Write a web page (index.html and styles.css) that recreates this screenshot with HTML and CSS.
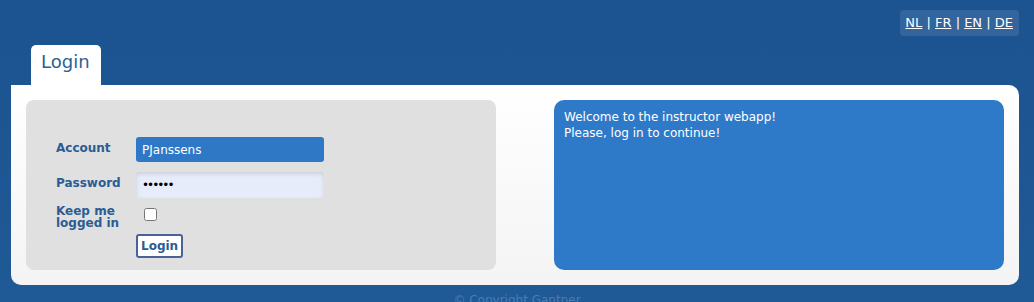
FILE: index.html
```html
<!DOCTYPE html>
<html lang="en">
<head>
  <meta charset="UTF-8"/>
  <title>Instructor webapp - Login</title>
  <link rel="stylesheet" href="styles.css">
</head>
<body>
<header class="top-bar">
  <div class="lang-box">
    <a href="#">NL</a> | <a href="#">FR</a> | <a href="#">EN</a> | <a href="#">DE</a>
  </div>
</header>

<div class="tab-row">
  <div class="tab">Login</div>
</div>

<main class="panel">
  <form class="login-box" onsubmit="return false">
    <div class="form-grid">
      <label for="account">Account</label>
      <input id="account" class="input-account" type="text" value="PJanssens">

      <label for="password">Password</label>
      <input id="password" class="input-password" type="password" value="secret">

      <label for="keep" class="keep-label">Keep me logged in</label>
      <div class="keep-cell"><input id="keep" type="checkbox"></div>

      <span></span>
      <div><button class="login-btn">Login</button></div>
    </div>
  </form>

  <div class="welcome-box">
    Welcome to the instructor webapp!<br>
    Please, log in to continue!
  </div>
</main>

<footer class="footer">© Copyright Gantner</footer>
</body>
</html>
```

FILE: styles.css
```css
body {
  margin: 0;
  font-family: "DejaVu Sans", Verdana, sans-serif;
  font-size: 12px;
  background: linear-gradient(#1c5391, #1f5996);
  height: 302px;
  overflow: hidden;
}
.top-bar {
  display: flex;
  justify-content: flex-end;
  padding: 10px 15px 0 0;
}
.lang-box {
  background-color: rgba(255,255,255,0.1);
  border-radius: 4px;
  padding: 5px 6px 5px 5px;
  color: #fff;
  font-size: 13px;
  line-height: 16px;
}
.lang-box a {
  color: #fff;
}
.tab-row {
  padding: 9px 0 0 31px;
}
.tab {
  display: inline-block;
  background-color: #fff;
  border-radius: 5px 5px 0 0;
  color: #2c5f98;
  font-size: 18px;
  padding: 6px 11px 0 10px;
  box-sizing: border-box;
  height: 40px;
}
.panel {
  margin: 0 15px 0 11px;
  background: linear-gradient(#fff, #f4f4f4);
  border-radius: 0 10px 10px 10px;
  padding: 15px;
  display: flex;
  justify-content: space-between;
}
.login-box {
  width: 470px;
  height: 170px;
  background-color: #e0e0e0;
  border-radius: 8px;
  box-sizing: border-box;
  padding: 37px 0 0 30px;
  margin: 0;
}
.form-grid {
  display: grid;
  grid-template-columns: 80px 188px;
  row-gap: 10px;
  align-items: start;
}
.form-grid label {
  font-weight: bold;
  color: #2a5d93;
  padding-top: 5px;
  line-height: 12px;
}
.form-grid .keep-label {
  padding-top: 0;
  width: 70px;
  line-height: 12px;
  margin-top: -3px;
}
.form-grid input[type=text],
.form-grid input[type=password] {
  font-family: "DejaVu Sans", Verdana, sans-serif;
  font-size: 12px;
  height: 25px;
  border: none;
  border-radius: 3px;
  padding: 0 6px;
  box-sizing: border-box;
  outline: none;
}
.input-account {
  background-color: #2e78c6;
  color: #fff;
}
.input-password {
  background-color: #e6ecf9;
  box-shadow: inset 0 2px 4px rgba(0,0,0,0.12);
  color: #000;
  letter-spacing: -2px;
  height: 26px !important;
}
.keep-cell input {
  margin: 0 0 0 8px;
  width: 13px;
  height: 13px;
}
.login-btn {
  font-family: "DejaVu Sans", Verdana, sans-serif;
  font-size: 12px;
  font-weight: bold;
  color: #2a5d93;
  background-color: #fff;
  border: 2px solid #4a6296;
  border-radius: 3px;
  height: 24px;
  padding: 0 3px;
  margin-top: -5px;
}
.welcome-box {
  width: 450px;
  height: 170px;
  background-color: #2e7ac9;
  border-radius: 10px;
  color: #fff;
  padding: 9px 10px;
  box-sizing: border-box;
  line-height: 16px;
}
.footer {
  text-align: center;
  color: #4b7cb2;
  padding-top: 8px;
}
```
